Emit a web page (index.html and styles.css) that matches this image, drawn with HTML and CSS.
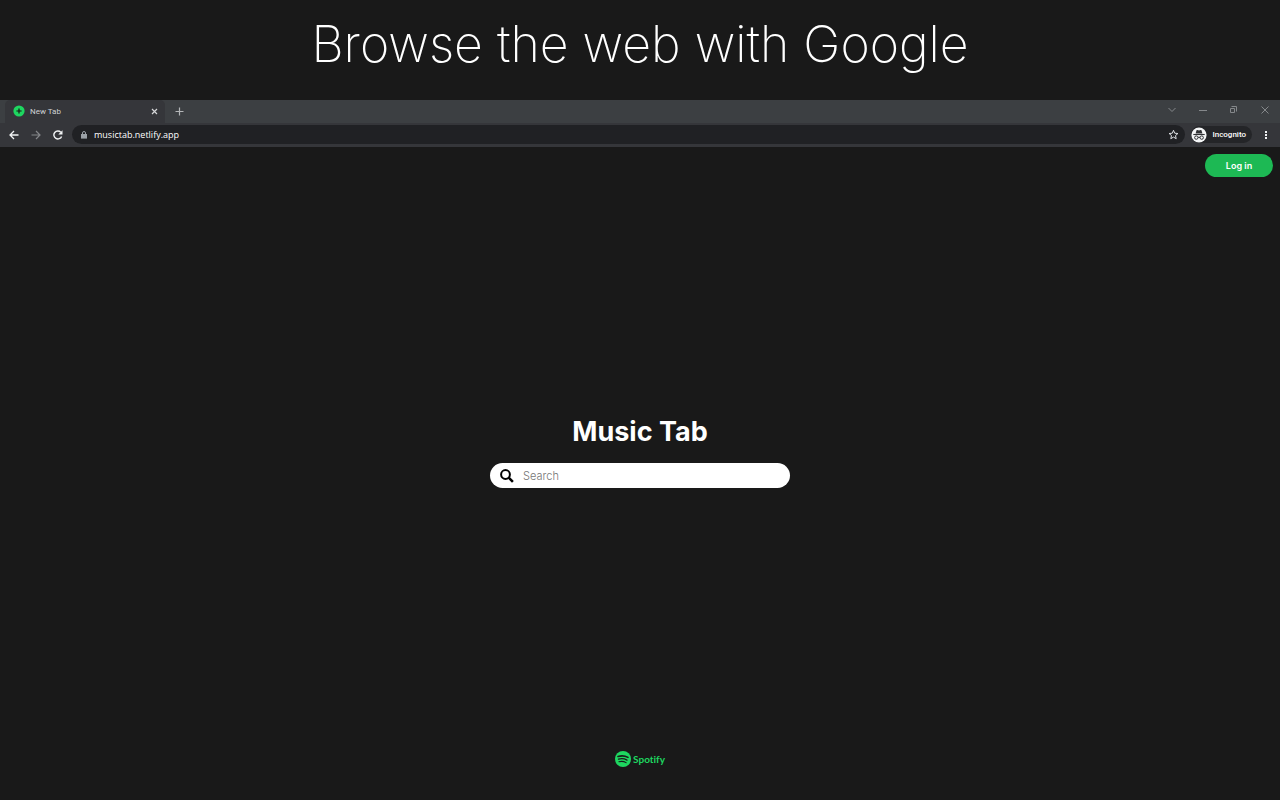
FILE: index.html
```html
<!DOCTYPE html>
<html lang="en">
<head>
    <meta charset="UTF-8">
    <meta name="viewport" content="width=device-width, initial-scale=1.0">
    <title>Music Tab</title>
    <link rel="stylesheet" href="styles.css">
</head>
<body>
<h1 class="headline">Browse the web with Google</h1>
<div class="browser">
    <div class="tabs">
        <div class="tab">
            <svg class="favicon" viewBox="0 0 12 12">
                <circle cx="6" cy="6" r="5.6" fill="#1ed760"/>
                <path d="M6 3.4v5.2M3.4 6h5.2" stroke="#191414" stroke-width="1.2"/>
            </svg>
            <span class="tab-title">New Tab</span>
            <button class="tab-button" type="button" aria-label="Close tab">
                <svg width="7" height="7" viewBox="0 0 7 7"><path d="M1 1l5 5M6 1L1 6" stroke="#d5d6d8" stroke-width="1.2"/></svg>
            </button>
        </div>
        <button class="tab-button new-tab" type="button" aria-label="Open new tab">
            <svg width="9" height="9" viewBox="0 0 9 9"><path d="M4.5 0.5v8M0.5 4.5h8" stroke="#b4b6b8" stroke-width="1.2"/></svg>
        </button>
        <div class="window-buttons">
            <button class="tab-button" type="button" aria-label="Search tabs">
                <svg width="10" height="10" viewBox="0 0 10 10"><path d="M1.5 3L5 6.5 8.5 3" fill="none" stroke="#85888b"/></svg>
            </button>
            <button class="tab-button" type="button" aria-label="Minimize">
                <svg width="10" height="10" viewBox="0 0 10 10"><path d="M1 5.500h8" stroke="#85888b"/></svg>
            </button>
            <button class="tab-button" type="button" aria-label="Restore">
                <svg width="10" height="10" viewBox="0 0 10 10"><path d="M1.500 3.500h4v4h-4zM2.500 1.500h5v5" fill="none" stroke="#85888b"/></svg>
            </button>
            <button class="tab-button" type="button" aria-label="Close window">
                <svg width="10" height="10" viewBox="0 0 10 10"><path d="M1.5 1.5l7 7M8.5 1.5l-7 7" stroke="#85888b"/></svg>
            </button>
        </div>
    </div>
    <div class="toolbar">
        <button class="nav-button" type="button" aria-label="Back">
            <svg width="10" height="10" viewBox="0 0 10 10"><path d="M9.5 5H1M5 1L1 5l4 4" fill="none" stroke="#f1f3f4" stroke-width="1.3"/></svg>
        </button>
        <button class="nav-button" type="button" aria-label="Forward">
            <svg width="10" height="10" viewBox="0 0 10 10"><path d="M0.5 5H9M5 1l4 4-4 4" fill="none" stroke="#85878a" stroke-width="1.2"/></svg>
        </button>
        <button class="nav-button" type="button" aria-label="Reload">
            <svg width="10" height="10" viewBox="0 0 10 10"><path d="M8.6 6.4A4 4 0 1 1 7.8 2.2" fill="none" stroke="#f1f3f4" stroke-width="1.4"/><path d="M9.5 0.2v4.2H5.3z" fill="#f1f3f4"/></svg>
        </button>
        <div class="address">
            <svg width="8" height="8" viewBox="0 0 8 8"><path d="M1 3h6v4.6H1z" fill="#9aa0a6"/><path d="M2.5 3.2V2a1.5 1.5 0 0 1 3 0v1.2" fill="none" stroke="#9aa0a6"/></svg>
            <input class="address-input" type="text" value="musictab.netlify.app" aria-label="Address">
            <button class="tab-button" type="button" aria-label="Bookmark this tab">
                <svg width="11" height="11" viewBox="0 0 11 11"><path d="M5.5 1.3l1.2 2.9 3.2.3-2.4 2.1.7 3.1-2.7-1.6-2.7 1.6.7-3.1L1.1 4.5l3.2-.3z" fill="none" stroke="#dfe1e5"/></svg>
            </button>
        </div>
        <div class="incognito">
            <svg width="16" height="16" viewBox="0 0 16 16">
                <circle cx="8" cy="8" r="7.6" fill="#f4f5f6"/>
                <path d="M4.6 6.5L5.5 3.3Q5.800 2.700 6.500 3L8 3.4 9.5 3Q10.200 2.700 10.500 3.300L11.4 6.500z" fill="#303134"/>
                <path d="M2.3 7.5h11.4" stroke="#303134" stroke-width="1.1"/>
                <path d="M7 10.5q1-.8 2 0" fill="none" stroke="#303134"/>
                <circle cx="5.3" cy="10.6" r="1.7" fill="none" stroke="#303134"/>
                <circle cx="10.7" cy="10.6" r="1.7" fill="none" stroke="#303134"/>
            </svg>
            <span>Incognito</span>
        </div>
        <button class="nav-button" type="button" aria-label="Menu">
            <svg width="4" height="10" viewBox="0 0 4 10" fill="#f1f3f4"><path d="M1 1h2v2H1zM1 4h2v2H1zM1 7h2v2H1z"/></svg>
        </button>
    </div>
    <main class="page">
        <div class="page-top">
            <button class="login" type="button">Log in</button>
        </div>
        <div class="center">
            <h2 class="title">Music Tab</h2>
            <form class="search">
                <label class="search-label" for="query" aria-label="Search">
                    <svg width="14" height="14" viewBox="0 0 14 14" fill="none" stroke="#000"><circle cx="5.5" cy="5.5" r="4.4" stroke-width="2"/><path d="M8.7 8.7l4.2 4.2" stroke-width="2.5"/></svg>
                </label>
                <input class="search-input" id="query" type="text" placeholder="Search">
            </form>
        </div>
        <footer class="footer">
            <a class="spotify" href="#">
                <svg width="16" height="16" viewBox="0 0 16 16">
                    <circle cx="8" cy="8" r="8" fill="#1ed760"/>
                    <path d="M3 5.5Q8.5 3.9 13 6.4" fill="none" stroke="#191919" stroke-width="1.6" stroke-linecap="round"/>
                    <path d="M3.5 8.2Q8 6.9 12 9.1" fill="none" stroke="#191919" stroke-width="1.3" stroke-linecap="round"/>
                    <path d="M3.9 10.7Q7.9 9.7 11.1 11.6" fill="none" stroke="#191919" stroke-width="1.1" stroke-linecap="round"/>
                </svg>
                <span>Spotify</span>
            </a>
        </footer>
    </main>
</div>
</body>
</html>
```
FILE: styles.css
```css
* {
    box-sizing: border-box;
}
body {
    margin: 0;
    min-height: 100vh;
    display: flex;
    flex-direction: column;
    background: #191919;
    color: #fff;
    font-family: Inter, "Liberation Sans", sans-serif;
}
button {
    border: 0;
    padding: 0;
    background: none;
    font-family: inherit;
    cursor: pointer;
}
svg {
    display: block;
    flex: none;
}
.headline {
    margin: 0;
    padding: 14px 16px 26px;
    font-size: 50px;
    line-height: 60px;
    font-weight: 200;
    text-align: center;
}
.browser {
    flex: 1;
    display: flex;
    flex-direction: column;
}

/* tab strip */
.tabs {
    display: flex;
    align-items: center;
    height: 23px;
    padding-left: 5px;
    background: #3c3f42;
}
.tab {
    display: flex;
    align-items: center;
    gap: 5px;
    width: 160px;
    height: 23px;
    padding: 0 7px 1px 8px;
    border-radius: 5px 5px 0 0;
    background: #35363a;
}
.favicon {
    width: 12px;
    height: 12px;
}
.tab-title {
    flex: 1;
    color: #cfd1d4;
    font: 8px Roboto, sans-serif;
}
.tab-button {
    display: flex;
    align-items: center;
    justify-content: center;
}
.new-tab {
    margin-left: 10px;
}
.window-buttons {
    display: flex;
    gap: 21px;
    margin-left: auto;
    padding: 0 10px 4px 0;
}

/* toolbar */
.toolbar {
    display: flex;
    align-items: center;
    gap: 6px;
    height: 24px;
    padding: 0 6px 1px;
    background: #35363a;
}
.nav-button {
    display: flex;
    align-items: center;
    justify-content: center;
    min-width: 16px;
    height: 16px;
}
.address {
    flex: 1;
    display: flex;
    align-items: center;
    gap: 6px;
    height: 19px;
    padding: 0 6px 0 8px;
    border-radius: 10px;
    background: #202124;
}
.address-input {
    flex: 1;
    min-width: 0;
    padding: 0;
    border: 0;
    outline: 0;
    background: none;
    color: #fff;
    font: 9px "Open Sans", sans-serif;
}
.incognito {
    display: flex;
    align-items: center;
    gap: 5px;
    height: 17px;
    padding-right: 6px;
    border-radius: 9px;
    background: #242528;
    font: 500 8px Roboto, sans-serif;
}

/* new tab page */
.page {
    flex: 1;
    display: grid;
    grid-template-rows: 1fr auto 1fr;
}
.page-top {
    display: flex;
    align-items: flex-start;
    justify-content: flex-end;
    padding: 7px;
}
.login {
    width: 68px;
    height: 23px;
    border-radius: 12px;
    background: #1db954;
    color: #fff;
    font-size: 9px;
    font-weight: 600;
}
.center {
    display: flex;
    flex-direction: column;
    align-items: center;
    gap: 13px;
    padding: 0 16px 45px;
}
.title {
    margin: 0;
    font-size: 27px;
    line-height: 36px;
    font-weight: 700;
}
.search {
    display: flex;
    align-items: center;
    gap: 9px;
    width: 300px;
    max-width: 100%;
    height: 25px;
    padding: 0 10px;
    border-radius: 13px;
    background: #fff;
}
.search-input {
    flex: 1;
    min-width: 0;
    padding: 0;
    border: 0;
    outline: 0;
    background: none;
    color: #191919;
    font: 300 11px Inter, sans-serif;
}
.search-input::placeholder {
    color: #757575;
}
.footer {
    display: flex;
    align-items: flex-end;
    justify-content: center;
    padding-bottom: 33px;
}
.spotify {
    display: flex;
    align-items: center;
    gap: 2px;
    color: #1ed760;
    font: 700 10px/16px Lato, sans-serif;
    font-variant-ligatures: none;
    text-decoration: none;
}
```
